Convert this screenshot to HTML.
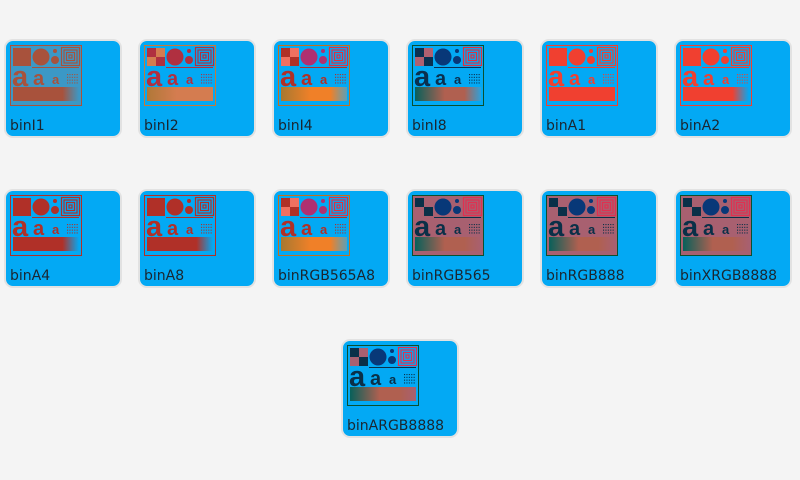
<!DOCTYPE html>
<html><head><meta charset="utf-8"><style>
html,body{margin:0;padding:0;background:#f4f4f4;width:800px;height:480px;overflow:hidden;font-family:"DejaVu Sans",sans-serif}
.t{position:absolute;width:114px;height:95px;background:#03a9f4;border:2px solid #e2e2e2;border-radius:9px}
.t svg{position:absolute;left:4px;top:4px;width:72px;height:61px}
.t span{position:absolute;left:4px;top:77px;font-size:14px;color:#1a2630}
</style></head><body>
<div class="t" id="a0" style="left:4px;top:39px"><span>binI1</span></div>
<div class="t" id="a1" style="left:138px;top:39px"><span>binI2</span></div>
<div class="t" id="a2" style="left:272px;top:39px"><span>binI4</span></div>
<div class="t" id="a3" style="left:406px;top:39px"><span>binI8</span></div>
<div class="t" id="a4" style="left:540px;top:39px"><span>binA1</span></div>
<div class="t" id="a5" style="left:674px;top:39px"><span>binA2</span></div>
<div class="t" id="a6" style="left:4px;top:189px"><span>binA4</span></div>
<div class="t" id="a7" style="left:138px;top:189px"><span>binA8</span></div>
<div class="t" id="a8" style="left:272px;top:189px"><span>binRGB565A8</span></div>
<div class="t" id="a9" style="left:406px;top:189px"><span>binRGB565</span></div>
<div class="t" id="a10" style="left:540px;top:189px"><span>binRGB888</span></div>
<div class="t" id="a11" style="left:674px;top:189px"><span>binXRGB8888</span></div>
<div class="t" id="a12" style="left:341px;top:339px"><span>binARGB8888</span></div>
<script>
var P=[
["#3b98c6","#a8523c","#a8523c","#a8523c",null,["#a8523c","#a8523c","#3b98c6"],"#a8523c"],
["none","#b03040","#b03040","#c87838","#d47c50",["#b07838","#d47c50","#d47c50"],"#b03040"],
["none","#b03028","#b03070","#c07020","#f07060",["#a87830","#f08028","#5ca0b8"],"#e03040"],
["none","#0a3050","#083878","#0a5030","#b06070",["#08605a","#b06050","#30a0d8"],"#e03040"],
["none","#f04030","#f04030","#f04030",null,["#f04030","#f04030","#f04030"],"#f04030"],
["none","#f04030","#f04030","#f04030",null,["#f04030","#f04030","#03a9f4"],"#f04030"],
["none","#b03028","#b03028","#b03028",null,["#b03028","#b03028","#03a9f4"],"#b03028"],
["none","#b03028","#b03028","#b03028",null,["#b03028","#b03028","#03a9f4"],"#b03028"],
["none","#b03028","#b03070","#c07020","#f07060",["#a87830","#f08028","#5ca0b8"],"#e03040"],
["#a86070","#0a3048","#083878","#0a5030","#a86070",["#08605a","#b06050","#a86070"],"#e03050"],
["#a86070","#0a3048","#083878","#0a5030","#a86070",["#08605a","#b06050","#a86070"],"#e03050"],
["#a86070","#0a3048","#083878","#0a5030","#a86070",["#08605a","#b06050","#a86070"],"#e03050"],
["#03a9f4","#0a3048","#083878","#0a5030","#a86070",["#08605a","#b06050","#a86070"],"#e03050"]];
P.forEach(function(p,i){
var sq=p[4]?'<rect x="3" y="3" width="9" height="9" fill="'+p[1]+'"/><rect x="12" y="3" width="9" height="9" fill="'+p[4]+'"/><rect x="3" y="12" width="9" height="9" fill="'+p[4]+'"/><rect x="12" y="12" width="9" height="9" fill="'+p[1]+'"/>':'<rect x="3" y="3" width="18" height="18" fill="'+p[1]+'"/>';
var cs='';for(var k=0;k<4;k++){cs+='<rect x="'+(51.5+k*2.5)+'" y="'+(2.5+k*2.5)+'" width="'+(18-k*5)+'" height="'+(18-k*5)+'" fill="none" stroke="'+p[6]+'" stroke-width="1.2"/>';}
var dots='';for(var r=0;r<4;r++)for(var c=0;c<5;c++)dots+='<rect x="'+(57+c*2.4)+'" y="'+(29+r*2.8)+'" width="1.1" height="1.1" fill="'+p[1]+'"/>';
var s='<svg viewBox="0 0 72 61"><defs><linearGradient id="g'+i+'"><stop offset="0" stop-color="'+p[5][0]+'"/><stop offset=".45" stop-color="'+p[5][1]+'"/><stop offset=".75" stop-color="'+p[5][1]+'"/><stop offset="1" stop-color="'+p[5][2]+'"/></linearGradient></defs>'+
'<rect x="0.5" y="0.5" width="71" height="60" fill="'+p[0]+'" stroke="'+p[3]+'" stroke-width="1"/>'+sq+
'<circle cx="31" cy="12" r="8.5" fill="'+p[2]+'"/><circle cx="45" cy="15" r="4" fill="'+p[2]+'"/><circle cx="45" cy="6" r="2" fill="'+p[2]+'"/>'+cs+
'<rect x="22" y="22" width="47" height="1" fill="'+p[1]+'"/>'+
'<text x="2" y="41" font-family="Liberation Sans,sans-serif" font-weight="bold" font-size="29" fill="'+p[1]+'">a</text>'+
'<text x="23" y="40" font-family="Liberation Sans,sans-serif" font-weight="bold" font-size="20" fill="'+p[1]+'">a</text>'+
'<text x="42" y="39" font-family="Liberation Sans,sans-serif" font-weight="bold" font-size="13" fill="'+p[1]+'">a</text>'+dots+
'<rect x="3" y="42" width="66" height="14" fill="url(#g'+i+')"/></svg>';
document.getElementById('a'+i).insertAdjacentHTML('afterbegin',s);});
</script>
</body></html>
